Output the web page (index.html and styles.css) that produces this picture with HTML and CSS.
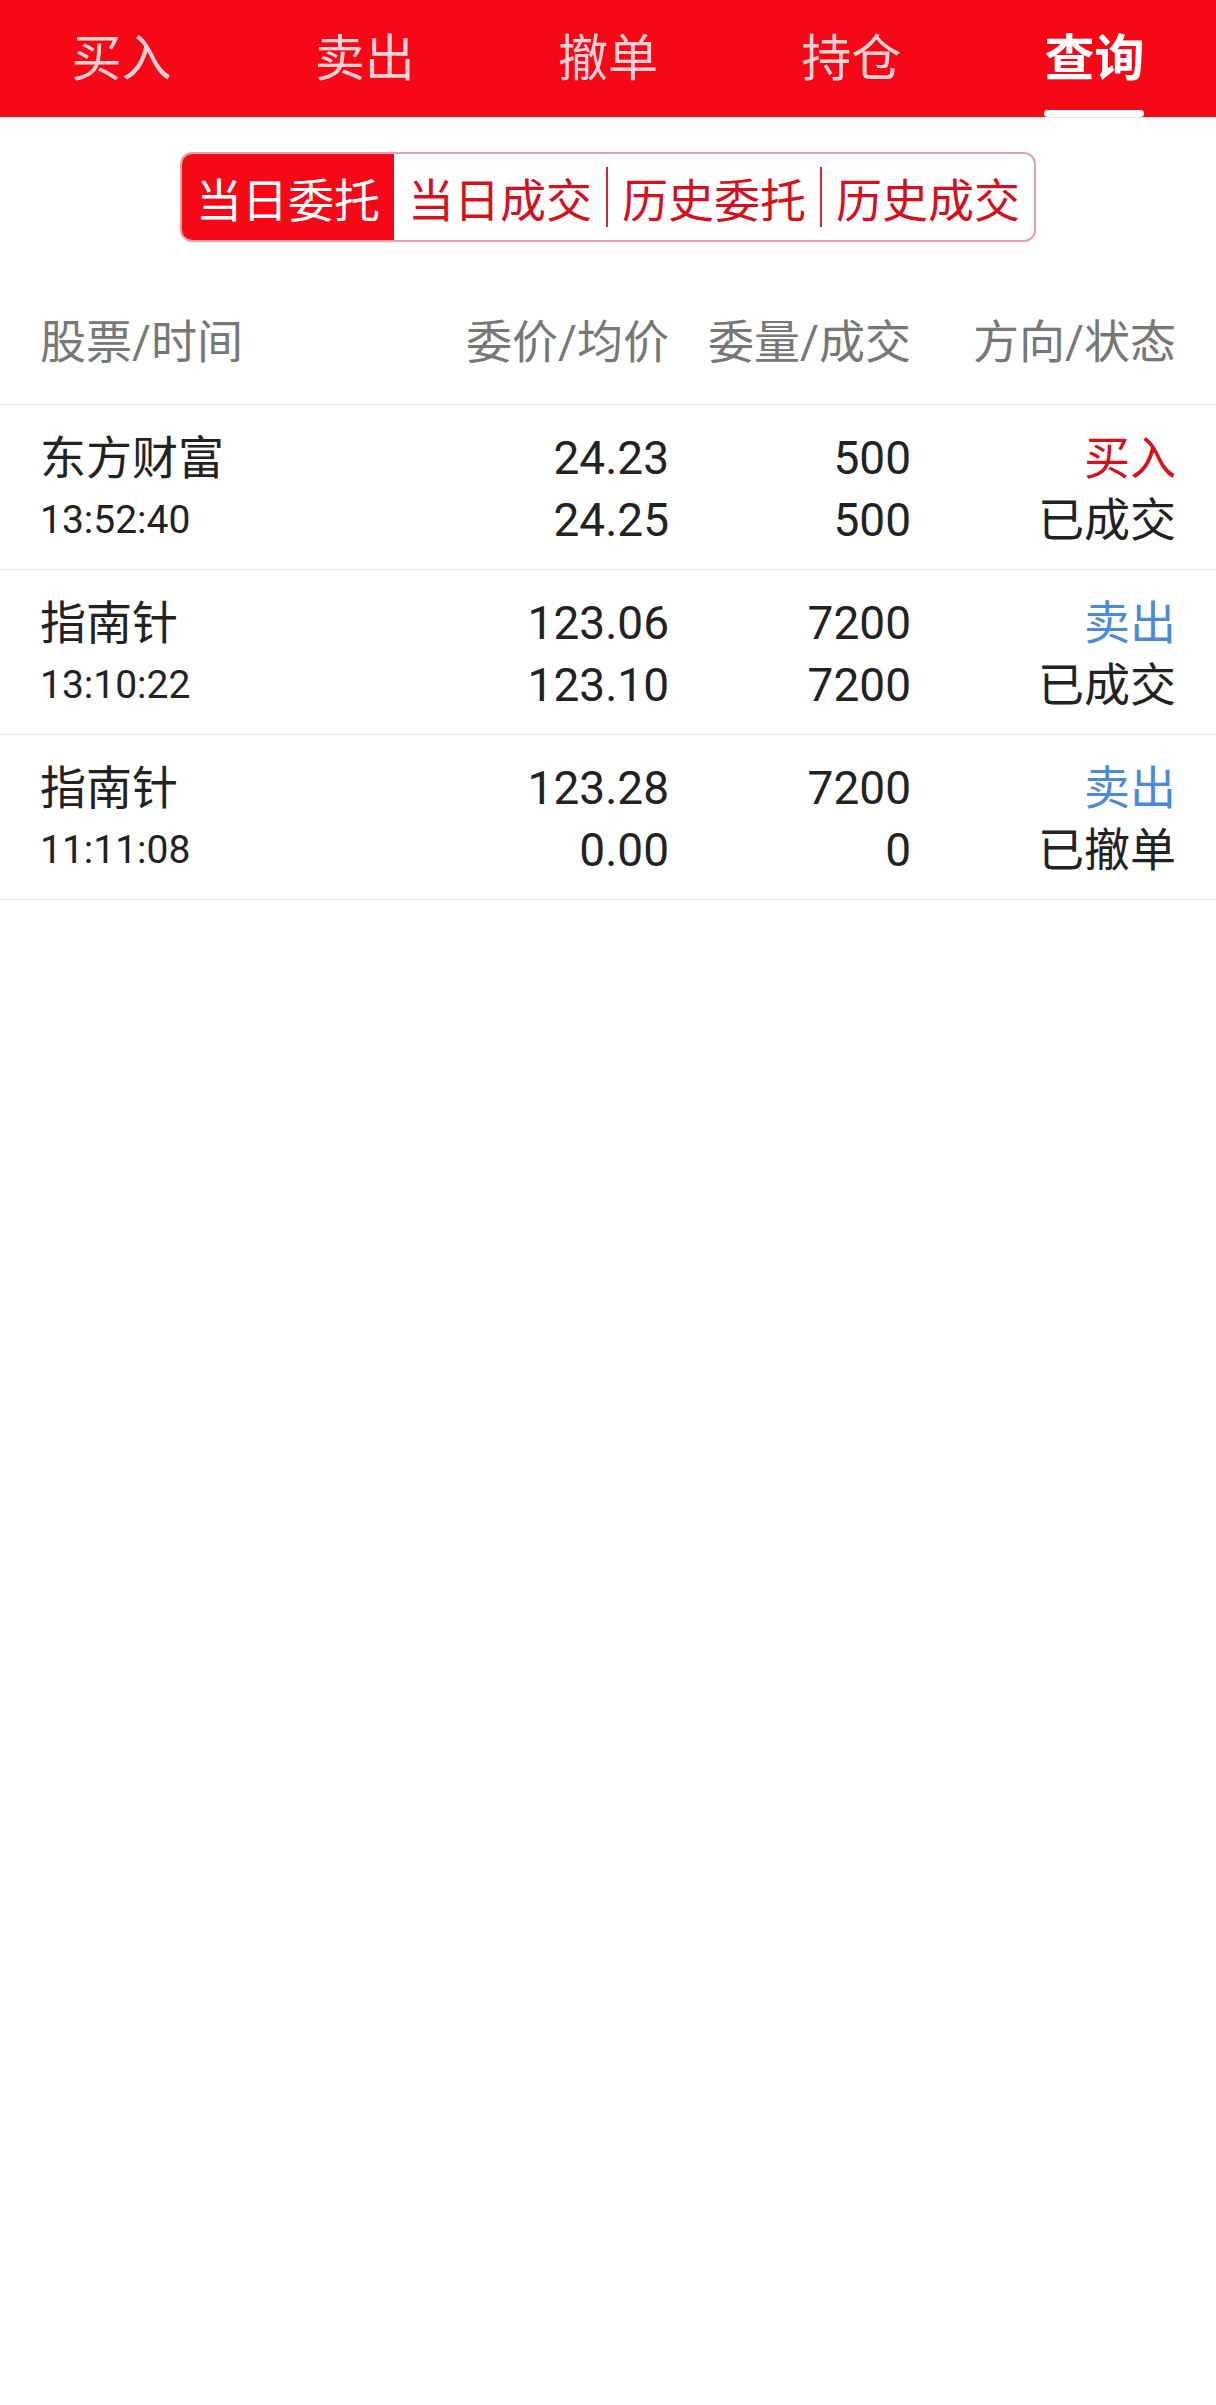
FILE: index.html
```html
<!DOCTYPE html>
<html lang="zh-CN">
<head>
  <meta charset="UTF-8">
  <meta name="viewport" content="width=device-width, initial-scale=1.0">
  <title>查询</title>
  <link rel="stylesheet" href="styles.css">
</head>
<body>
  <div class="tabs">
    <div class="tab"><span class="tab-label">买入<i class="bar"></i></span></div>
    <div class="tab"><span class="tab-label">卖出<i class="bar"></i></span></div>
    <div class="tab"><span class="tab-label">撤单<i class="bar"></i></span></div>
    <div class="tab"><span class="tab-label">持仓<i class="bar"></i></span></div>
    <div class="tab active"><span class="tab-label">查询<i class="bar"></i></span></div>
  </div>

  <div class="seg-wrap">
    <div class="seg">
      <span class="seg-item on">当日委托</span>
      <span class="seg-item">当日成交</span>
      <i class="seg-sep"></i>
      <span class="seg-item">历史委托</span>
      <i class="seg-sep"></i>
      <span class="seg-item">历史成交</span>
    </div>
  </div>

  <div class="grid thead">
    <div class="col-name">股票/时间</div>
    <div class="col-r">委价/均价</div>
    <div class="col-r">委量/成交</div>
    <div class="col-r">方向/状态</div>
  </div>

  <div class="grid row">
    <div class="col-name">
      <div class="l1">东方财富</div>
      <div class="l2 time">13:52:40</div>
    </div>
    <div class="col-r num">
      <div class="l1">24.23</div>
      <div class="l2">24.25</div>
    </div>
    <div class="col-r num">
      <div class="l1">500</div>
      <div class="l2">500</div>
    </div>
    <div class="col-r">
      <div class="l1 buy">买入</div>
      <div class="l2">已成交</div>
    </div>
  </div>

  <div class="grid row">
    <div class="col-name">
      <div class="l1">指南针</div>
      <div class="l2 time">13:10:22</div>
    </div>
    <div class="col-r num">
      <div class="l1">123.06</div>
      <div class="l2">123.10</div>
    </div>
    <div class="col-r num">
      <div class="l1">7200</div>
      <div class="l2">7200</div>
    </div>
    <div class="col-r">
      <div class="l1 sell">卖出</div>
      <div class="l2">已成交</div>
    </div>
  </div>

  <div class="grid row">
    <div class="col-name">
      <div class="l1">指南针</div>
      <div class="l2 time">11:11:08</div>
    </div>
    <div class="col-r num">
      <div class="l1">123.28</div>
      <div class="l2">0.00</div>
    </div>
    <div class="col-r num">
      <div class="l1">7200</div>
      <div class="l2">0</div>
    </div>
    <div class="col-r">
      <div class="l1 sell">卖出</div>
      <div class="l2">已撤单</div>
    </div>
  </div>
</body>
</html>
```

FILE: styles.css
```css
* { box-sizing: border-box; }
body {
  font-family: Roboto, 'Noto Sans CJK SC', sans-serif;
  margin: 0;
  background-color: #fff;
  color: #222;
}

/* top tabs */
.tabs {
  display: flex;
  height: 117px;
  background-color: #f60816;
  box-shadow: 0 1px 0 #e4e4e4;
}
.tab {
  flex: 1;
  display: flex;
  justify-content: center;
  padding-top: 28px;
}
.tab-label {
  display: flex;
  flex-direction: column;
  align-items: center;
  font-size: 50px;
  line-height: 62px;
  color: rgba(255,255,255,0.82);
}
.bar {
  display: block;
  width: 100%;
  height: 7px;
  margin-top: 20px;
  border-radius: 4px;
}
.tab.active .tab-label {
  color: #fff;
  font-weight: bold;
}
.tab.active .bar {
  background-color: #fff;
}

/* segmented control */
.seg-wrap {
  display: flex;
  justify-content: center;
  padding-top: 35px;
}
.seg {
  display: flex;
  align-items: center;
  height: 90px;
  border: 2px solid #e3a2a7;
  border-radius: 12px;
  overflow: hidden;
}
.seg-item {
  height: 100%;
  display: flex;
  align-items: center;
  padding: 0 14px;
  font-size: 46px;
  color: #d3121d;
}
.seg-item.on {
  background-color: #f60816;
  color: #fff;
}
.seg-sep {
  width: 2px;
  height: 60px;
  background-color: #cf2a33;
}

/* table */
.grid {
  display: grid;
  grid-template-columns: 1fr 250px 242px 265px;
  padding: 0 40px;
  border-bottom: 1px solid #e9e9e9;
}
.thead {
  padding-top: 70px;
  padding-bottom: 32px;
  font-size: 46px;
  line-height: 60px;
  color: #777;
}
.col-name { text-align: left; }
.col-r { text-align: right; }
.row {
  height: 165px;
  padding-top: 22px;
  font-size: 46px;
}
.l1, .l2 {
  line-height: 62px;
  white-space: nowrap;
}
.time { font-size: 39px; }
.buy { color: #d4121d; }
.sell { color: #4c8ad9; }
```
